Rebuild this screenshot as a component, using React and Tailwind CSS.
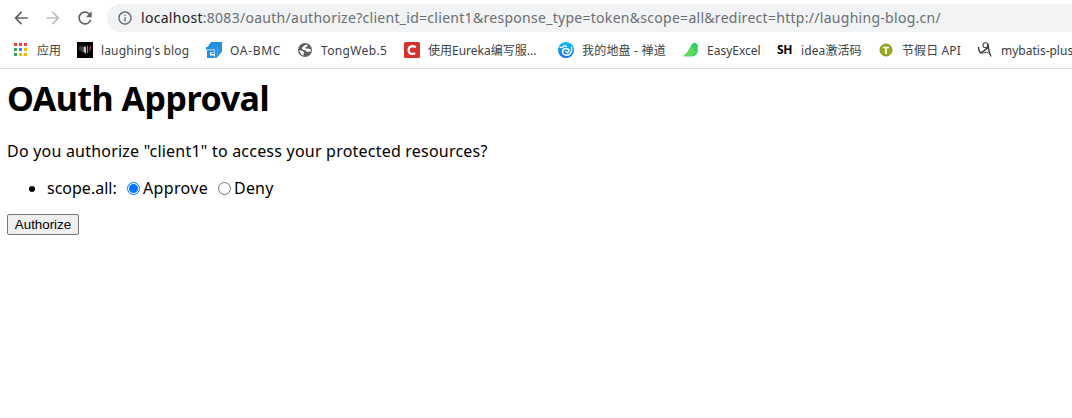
import React from 'react';
import { MdArrowBack, MdArrowForward, MdRefresh, MdInfoOutline } from 'react-icons/md';

const AppsIcon = () => (
  <svg viewBox="0 0 16 16" className="size-4" shapeRendering="crispEdges">
    {[
      ['#ea4335', '#ea4335', '#ea4335'],
      ['#34a853', '#4285f4', '#fbbc05'],
      ['#34a853', '#fbbc05', '#fbbc05'],
    ].map((row, y) =>
      row.map((c, x) => <rect key={`${x}${y}`} x={1 + x * 5} y={1 + y * 5} width="3" height="3" fill={c} />),
    )}
  </svg>
);

const BlogIcon = () => (
  <svg viewBox="0 0 16 16" className="size-4">
    <rect width="16" height="16" fill="#000" />
    <path d="M3 4.500v4M5 4v6" stroke="#777" strokeWidth="1" fill="none" />
    <path d="M6.500 5.500 8 4l1 1.500v6.500L7.500 10.500 6.500 9.500Z" fill="#ccc" />
    <path d="M10.500 4v7" stroke="#888" strokeWidth="1" />
    <path d="M12.300 5v5" stroke="#633" strokeWidth="1" />
    <path d="M13.500 3.500v4.500" stroke="#a33" strokeWidth="1" />
  </svg>
);

const OaIcon = () => (
  <svg viewBox="0 0 16 16" className="size-4">
    <path d="M5 0h11v9.500L11.500 15V5H1.500Z" fill="#2490e2" />
    <path d="M0 5h11.500v10l-1 1H9V7.500H0Z" fill="#2490e2" />
    <path d="M1 8.300h7.500v2.200H4v3h4.500V16H1Z" fill="#2490e2" />
    <path d="M5.500 11.500h3" stroke="#2490e2" strokeWidth="1" />
  </svg>
);

const GlobeIcon = () => (
  <svg viewBox="0 0 16 16" className="size-4">
    <circle cx="8" cy="8" r="7" fill="#5f6368" />
    <path d="M10.500 2.600 8 3.300 6.500 4.300 5 5.800 5.300 7.500l2.700.5 1.300 1.500 2 .5.700-.5 1.500.3.800-2-2-.8-1.700-.5-1.800.2L8 5.600l2-.8ZM2 8.300l3.500.6 1.800 1.600-.8 1-.1 2.200-2-1.300Z" fill="#fff" />
  </svg>
);

const CIcon = () => (
  <svg viewBox="0 0 16 16" className="size-4">
    <rect width="16" height="16" rx="1.500" fill="#d63229" />
    <path d="M11.700 5.200Q10 4.200 8.200 4.200 4.800 4.500 4.600 8q0 3.800 3.600 3.900 1.600 0 3-.8" stroke="#fff" strokeWidth="2.200" fill="none" />
  </svg>
);

const ZenIcon = () => (
  <svg viewBox="0 0 16 16" className="size-4">
    <defs>
      <linearGradient id="zen" x2="0" y2="1">
        <stop stopColor="#12c0f6" />
        <stop offset="1" stopColor="#1268f0" />
      </linearGradient>
    </defs>
    <circle cx="8" cy="8" r="8" fill="url(#zen)" />
    <path d="M1.500 4.800q2 1.500 3.500 0Q7 3 9 4.800" stroke="#fff" strokeWidth="1.300" fill="none" />
    <path d="M13.500 5.200q.8 5.500-2.700 7.600-3.500 1.500-5.800-1-1.300-2.800.8-4.700 2.700-1.500 4.700.3 1 2-.8 3-1.500.3-1.700-1" stroke="#fff" strokeWidth="1.500" fill="none" strokeLinecap="round" />
  </svg>
);

const BirdIcon = () => (
  <svg viewBox="0 0 16 16" className="size-4">
    <path d="M7.500 5.500Q8.500 1 12 .8q1.700.1 2.200 1.700l1.400 1-.9 1.500q.8 4-1 7-2.200 2.800-6 2.600L6 11Z" fill="#35cf70" />
    <path d="M7.800 4.500 12.500 9q-.8 4.500-4.800 5.600H3.500L0 14.200Q4.800 10.500 7.800 4.500Z" fill="#5edb5b" />
  </svg>
);

const TIcon = () => (
  <svg viewBox="0 0 16 16" className="size-4">
    <circle cx="8" cy="8" r="6" fill="#9aaa20" stroke="#84921b" strokeWidth="1" />
    <path d="M5 5.500h6M8 5.500V12" stroke="#fff" strokeWidth="1.700" />
  </svg>
);

const MybatisIcon = () => (
  <svg viewBox="0 0 16 16" className="size-4">
    <circle cx="8.500" cy="3.200" r="2.500" stroke="#444" strokeWidth="1.100" fill="none" />
    <path d="M1.200 5Q2 9 3.500 10.800q4-1.500 7.200-5.300M11 2Q11.300 9.500 14 14.500" stroke="#333" strokeWidth="1.300" fill="none" />
    <path d="M3.500 11q2 .5 3.500-.2 3-1.300 4.500.2" stroke="#444" strokeWidth="1" fill="none" />
  </svg>
);

const ShIcon = () => (
  <span className="block w-4 text-[12px] leading-4 font-bold tracking-[-0.3px] text-black">SH</span>
);

const bookmarks = [
  { label: '应用', Icon: AppsIcon, box: 'w-16', text: '' },
  { label: "laughing's blog", Icon: BlogIcon, box: 'w-[129px]', text: 'tracking-[0.13px]' },
  { label: 'OA-BMC', Icon: OaIcon, box: 'w-[91px]', text: 'tracking-[0.7px]' },
  { label: 'TongWeb.5', Icon: GlobeIcon, box: 'w-[107px]', text: 'tracking-[0.35px]' },
  { label: '使用Eureka编写服...', Icon: CIcon, box: 'w-[154px]', text: '' },
  { label: '我的地盘 - 禅道', Icon: ZenIcon, box: 'w-[125px]', text: 'tracking-[0.2px]' },
  { label: 'EasyExcel', Icon: BirdIcon, box: 'w-[94px]', text: '' },
  { label: 'idea激活码', Icon: ShIcon, box: 'w-[101px]', text: 'tracking-[0.1px]' },
  { label: '节假日 API', Icon: TIcon, box: 'w-[99px]', text: 'tracking-[0.1px]' },
  { label: 'mybatis-plus', Icon: MybatisIcon, box: 'w-[120px]', text: '' },
];

function Radio({ checked }) {
  return (
    <span className={`mb-px flex size-[13px] items-center justify-center rounded-full border bg-white ${checked ? 'border-[#0075ff]' : 'border-[#767676]'}`}>
      {checked && <span className="size-[9px] rounded-full bg-[#0075ff]" />}
    </span>
  );
}

export default function App() {
  return (
    <div className="h-[418px] w-full overflow-hidden bg-white font-['Noto_Sans','Noto_Sans_CJK_SC',sans-serif] whitespace-nowrap text-black">
      <header className="h-[69px] overflow-hidden border-b border-[#dadce0]">
        <div className="flex h-9 items-center pl-[11px]">
          <MdArrowBack className="size-5 text-[#5f6368]" />
          <MdArrowForward className="ml-3 size-5 text-[#babcbe]" />
          <MdRefresh className="ml-3 size-5 text-[#5f6368]" />
          <div className="ml-[12px] flex h-7 flex-1 items-center rounded-l-full bg-[#f1f3f4] pl-[10px]">
            <MdInfoOutline className="size-4 text-[#5f6368]" />
            <span className="ml-2 text-[14px] leading-5 tracking-[0.285px] text-[#6b6f73]">
              <span className="text-[#202124]">localhost</span>
              :8083/oauth/authorize?client_id=client1&amp;response_type=token&amp;scope=all&amp;redirect=http://laughing-blog.cn/
            </span>
          </div>
        </div>
        <nav className="flex h-7 items-center pl-[13px]">
          {bookmarks.map(({ label, Icon, box, text }) => (
            <div key={label} className={`flex shrink-0 items-center gap-2 ${box}`}>
              <span className="size-4 shrink-0"><Icon /></span>
              <span className={`pt-0.5 text-[12px] leading-4 text-[#3c4043] ${text}`}>{label}</span>
            </div>
          ))}
        </nav>
      </header>
      <main className="pl-[7px]">
        <h1 className="pt-[7px] text-[34px] leading-[44px] font-bold tracking-[-0.5px]">OAuth Approval</h1>
        <p className="mt-[21px] text-[16px] leading-[21px] tracking-[0.215px]">Do you authorize "client1" to access your protected resources?</p>
        <ul className="mt-4 flex h-[21px] items-center text-[16px] leading-[21px]">
          <li className="flex items-center">
            <span className="ml-[22px] size-1.5 rounded-full bg-black" />
            <span className="ml-3 w-20">scope.all:</span>
            <Radio checked />
            <span className="ml-[3px] w-[75px] tracking-[0.35px]">Approve</span>
            <Radio />
            <span className="ml-[3px] tracking-[0.2px]">Deny</span>
          </li>
        </ul>
        <button className="mt-[15px] flex h-[21px] w-[72px] items-center justify-center rounded-[2px] border border-[#767676] bg-[#efefef] font-['Liberation_Sans',sans-serif] text-[13.333px]">
          Authorize
        </button>
      </main>
    </div>
  );
}
